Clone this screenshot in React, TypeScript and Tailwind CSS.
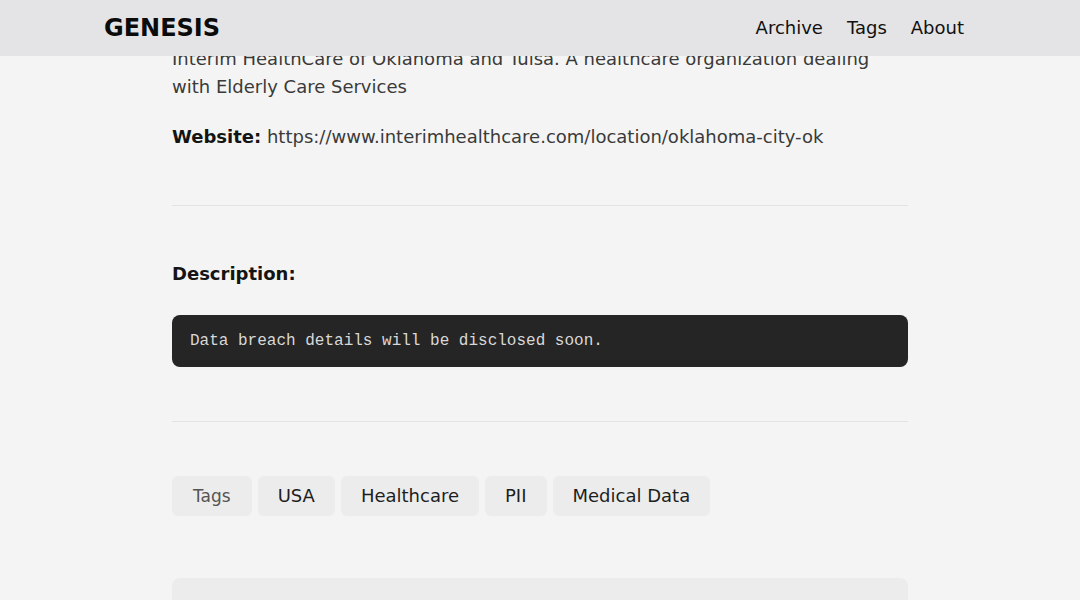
const tags = ['USA', 'Healthcare', 'PII', 'Medical Data'];

const Header = () => (
  <header className="fixed top-0 left-0 right-0 z-10 h-[56px] bg-[#e4e4e6]">
    <nav className="mx-auto flex h-full w-[872px] items-center justify-between pr-[12px]">
      <a href="#" className="text-[24px] font-bold text-[#0b0b0b]">
        GENESIS
      </a>
      <ul className="flex items-center gap-[24px] text-[18px] text-[#111]">
        <li>
          <a href="#">Archive</a>
        </li>
        <li>
          <a href="#">Tags</a>
        </li>
        <li>
          <a href="#">About</a>
        </li>
      </ul>
    </nav>
  </header>
);

export default function App() {
  return (
    <div
      className="min-h-screen bg-[#f4f4f4] text-[18px] leading-[28px]"
      style={{ fontFamily: '"DejaVu Sans", Verdana, sans-serif' }}
    >
      <Header />

      <main className="mx-auto w-[736px] pt-[45px]">
        <div className="text-[#3a3a3a]">
          <p>
            Interim HealthCare of Oklahoma and Tulsa. A healthcare organization dealing
            with Elderly Care Services
          </p>
          <p className="mt-[22px]">
            <strong className="font-bold text-[#141414]">Website:</strong>{' '}
            https://www.interimhealthcare.com/location/oklahoma-city-ok
          </p>
        </div>

        <hr className="mt-[54px] border-0 border-t border-[#e3e3e3]" />

        <p className="mt-[54px] font-bold text-[#141414]">Description:</p>

        <pre
          className="mt-[27px] rounded-[8px] bg-[#252525] px-[18px] py-[14px] text-[16px] leading-[24px] text-[#d8d8d8]"
          style={{ fontFamily: '"Liberation Mono", "DejaVu Sans Mono", monospace' }}
        >
          Data breach details will be disclosed soon.
        </pre>

        <hr className="mt-[54px] border-0 border-t border-[#e3e3e3]" />

        <ul className="mt-[54px] flex gap-[6px]">
          <li className="flex h-[40px] items-center rounded-[6px] bg-[#ececec] px-[21px] text-[17px] text-[#555]">
            Tags
          </li>
          {tags.map((t) => (
            <li
              key={t}
              className="flex h-[40px] items-center rounded-[6px] bg-[#ececec] px-[20px] text-[18px] text-[#1e1e1e]"
            >
              <a href="#">{t}</a>
            </li>
          ))}
        </ul>

        <div className="mt-[62px] h-[90px] rounded-t-[8px] bg-[#ececec]" />
      </main>
    </div>
  );
}
